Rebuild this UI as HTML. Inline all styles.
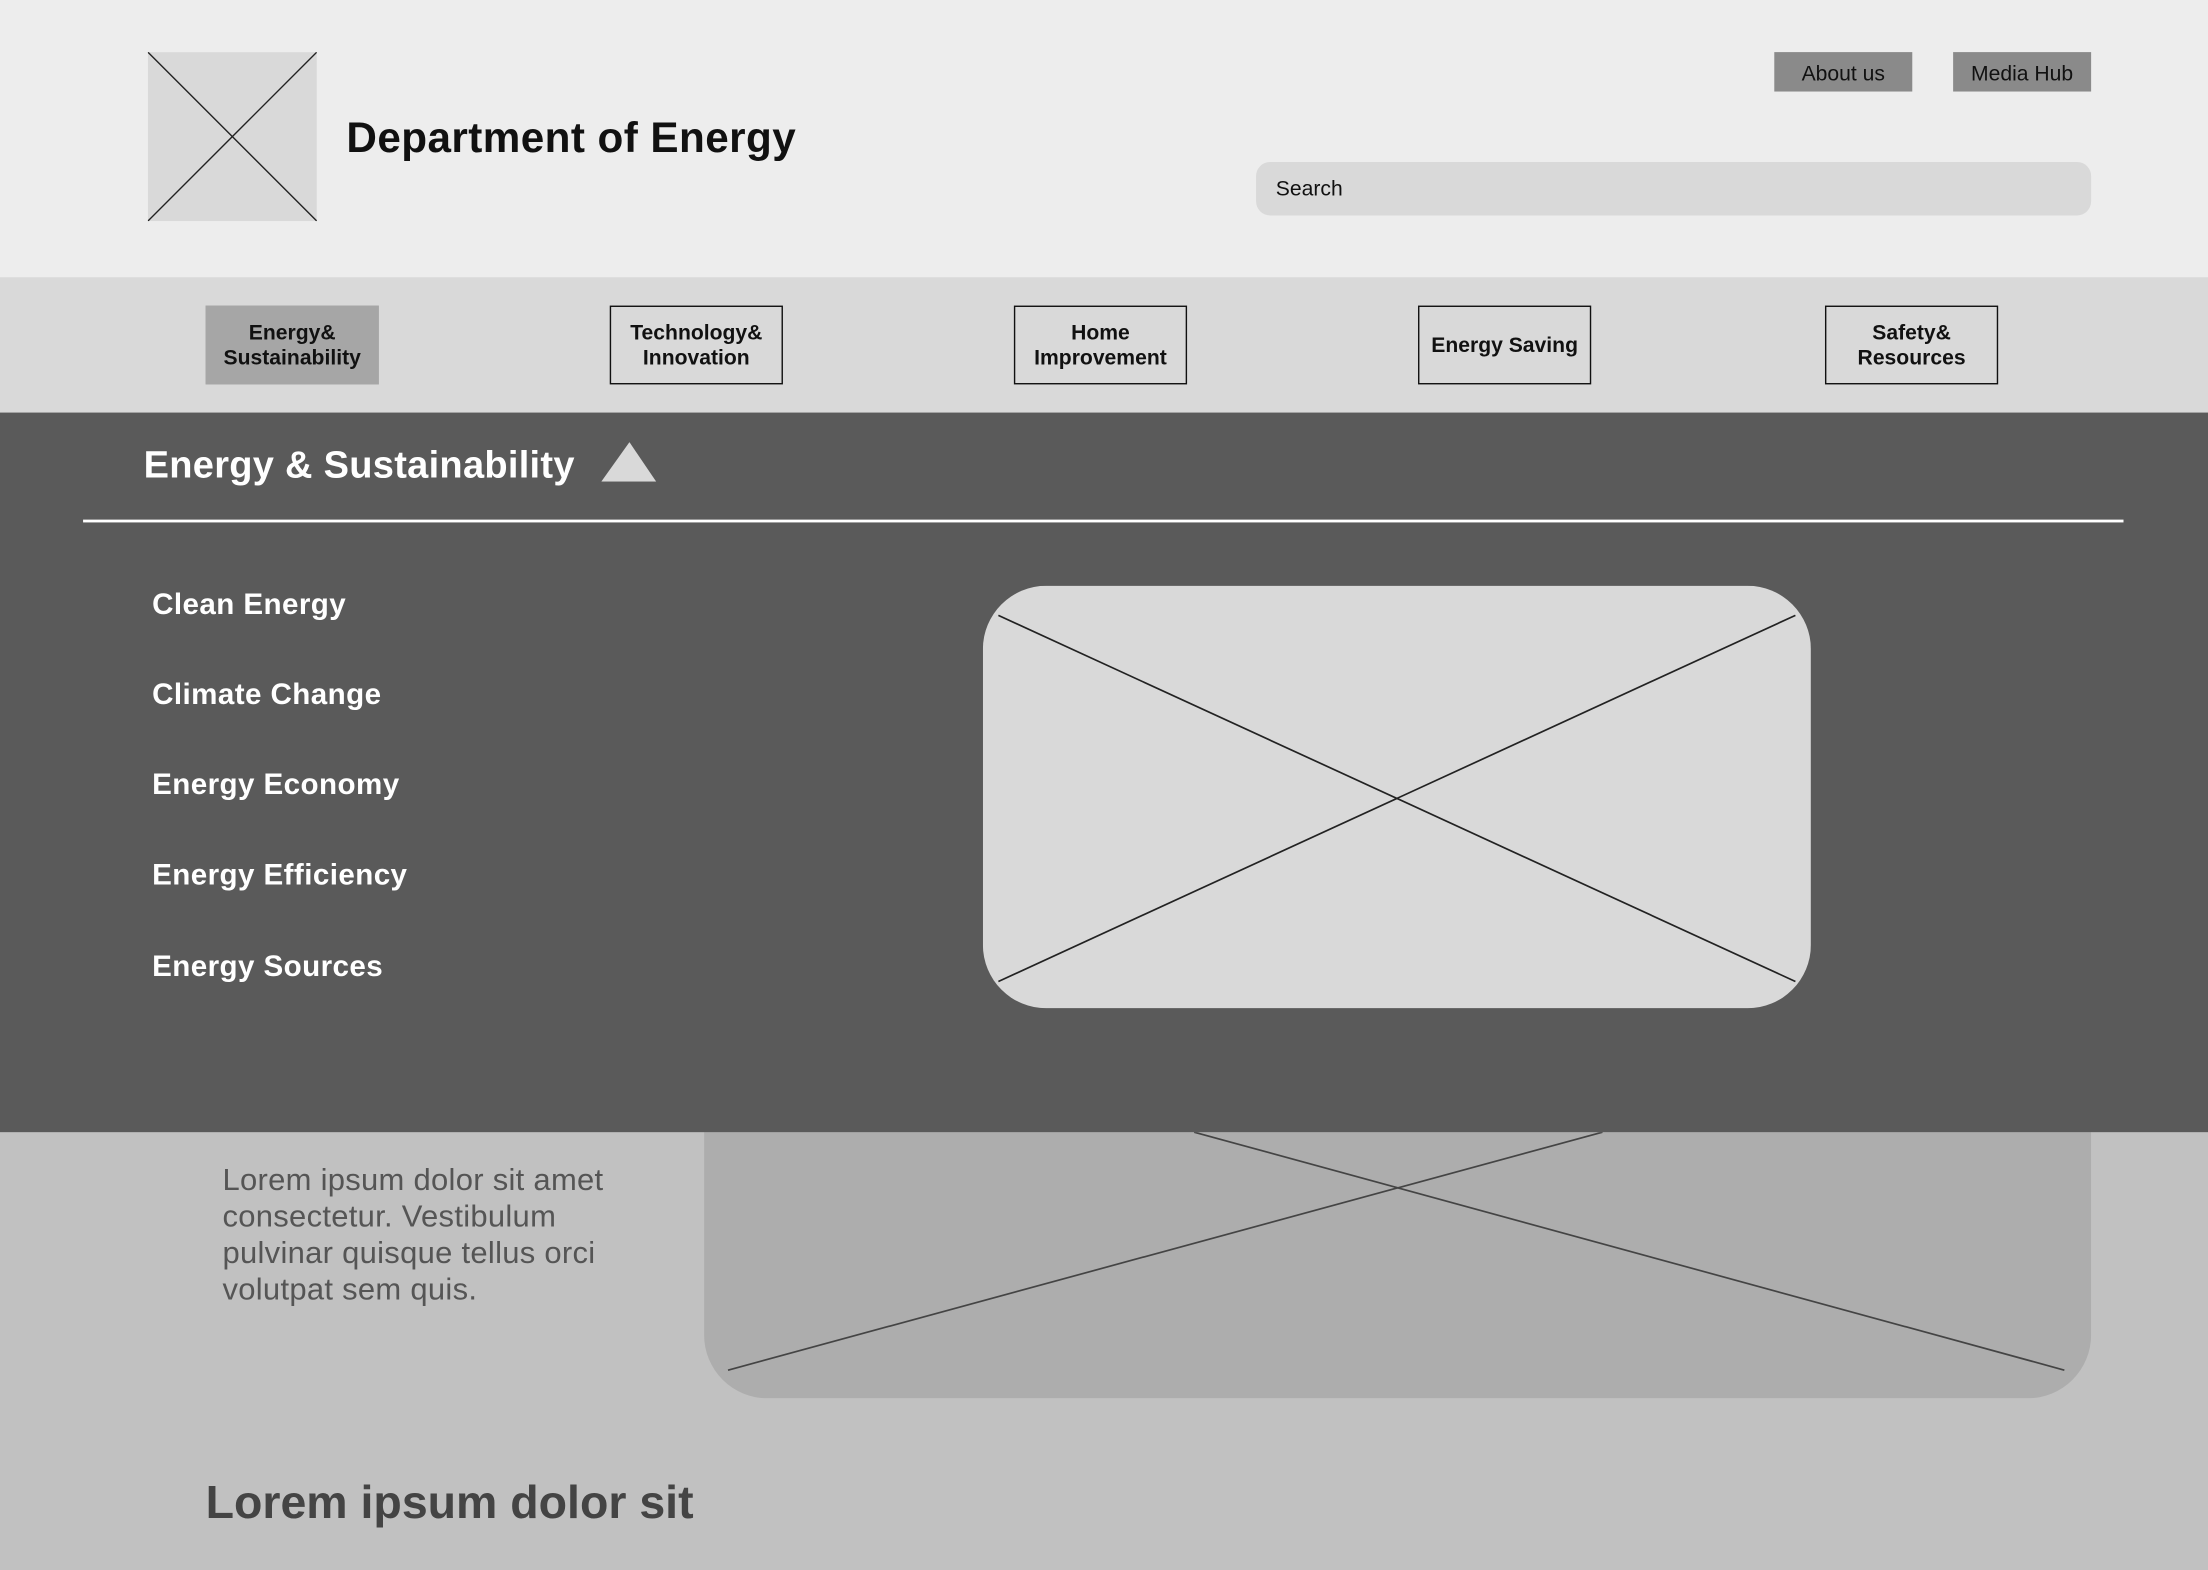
<!DOCTYPE html>
<html><head><style>
body{margin:0;width:2208px;height:1570px;overflow:hidden;background:#c1c1c1;font-family:"Liberation Sans",sans-serif}
#w{position:absolute;left:0;top:0;width:1568px;height:1115px;transform:scale(1.40816);transform-origin:0 0}
.a{position:absolute}
.nb{position:absolute;top:217px;width:121px;height:53px;border:1.5px solid #111;display:flex;align-items:center;justify-content:center;text-align:center;font-size:15px;font-weight:bold;line-height:18px;color:#111;padding-top:1px;box-sizing:content-box}
.mi{position:absolute;left:108px;font-size:21px;font-weight:bold;color:#fff;line-height:24px;letter-spacing:0.3px}
</style></head><body><div id="w">
<div class="a" style="left:0;top:0;width:1568px;height:197px;background:#ededed"></div>
<svg class="a" style="left:105px;top:37px" width="120" height="120"><rect width="120" height="120" fill="#d9d9d9"/><path d="M0 0L120 120M120 0L0 120" stroke="#222" stroke-width="1"/></svg>
<div class="a" style="left:246px;top:82px;font-size:30px;font-weight:bold;color:#111;letter-spacing:0.3px">Department of Energy</div>
<div class="a" style="left:1260px;top:37px;width:98px;height:28px;background:#8a8a8a;font-size:15px;line-height:31px;text-align:center;color:#111">About us</div>
<div class="a" style="left:1387px;top:37px;width:98px;height:28px;background:#8a8a8a;font-size:15px;line-height:31px;text-align:center;color:#111">Media Hub</div>
<div class="a" style="left:892px;top:115px;width:593px;height:38px;border-radius:10px;background:#d9d9d9;font-size:15px;line-height:40px;color:#111"><span style="margin-left:14px">Search</span></div>
<div class="a" style="left:0;top:197px;width:1568px;height:96px;background:#d9d9d9"></div>
<div class="nb" style="left:146px;background:#a6a6a6;border-color:#a6a6a6">Energy&amp;<br>Sustainability</div>
<div class="nb" style="left:433px">Technology&amp;<br>Innovation</div>
<div class="nb" style="left:720px">Home<br>Improvement</div>
<div class="nb" style="left:1007px">Energy Saving</div>
<div class="nb" style="left:1296px">Safety&amp;<br>Resources</div>
<svg class="a" style="left:500px;top:804px" width="985" height="189"><rect x="0" y="-60" width="985" height="249" rx="45" fill="#adadad"/><path d="M348 0L966 169M638 0L17 169" stroke="#444" stroke-width="1.2"/></svg>
<div class="a" style="left:158px;top:825px;font-size:22px;line-height:26px;color:#555;letter-spacing:0.2px">Lorem ipsum dolor sit amet<br>consectetur. Vestibulum<br>pulvinar quisque tellus orci<br>volutpat sem quis.</div>
<div class="a" style="left:146px;top:1048px;font-size:33px;font-weight:bold;color:#444">Lorem ipsum dolor sit</div>
<div class="a" style="left:0;top:293px;width:1568px;height:511px;background:#5a5a5a"></div>
<div class="a" style="left:102px;top:315px;font-size:27px;font-weight:bold;color:#fff;letter-spacing:0.2px">Energy &amp; Sustainability</div>
<svg class="a" style="left:427px;top:314px" width="40" height="28"><path d="M20 0L39 28H0Z" fill="#d9d9d9"/></svg>
<div class="a" style="left:59px;top:369px;width:1449px;height:2px;background:#fff"></div>
<div class="mi" style="top:418px">Clean Energy</div>
<div class="mi" style="top:482px">Climate Change</div>
<div class="mi" style="top:546px">Energy Economy</div>
<div class="mi" style="top:610px">Energy Efficiency</div>
<div class="mi" style="top:675px">Energy Sources</div>
<svg class="a" style="left:698px;top:416px" width="588" height="300"><rect width="588" height="300" rx="45" fill="#d9d9d9"/><path d="M11 21L577 281M11 281L577 21" stroke="#222" stroke-width="1.2"/></svg>
</div></body></html>
